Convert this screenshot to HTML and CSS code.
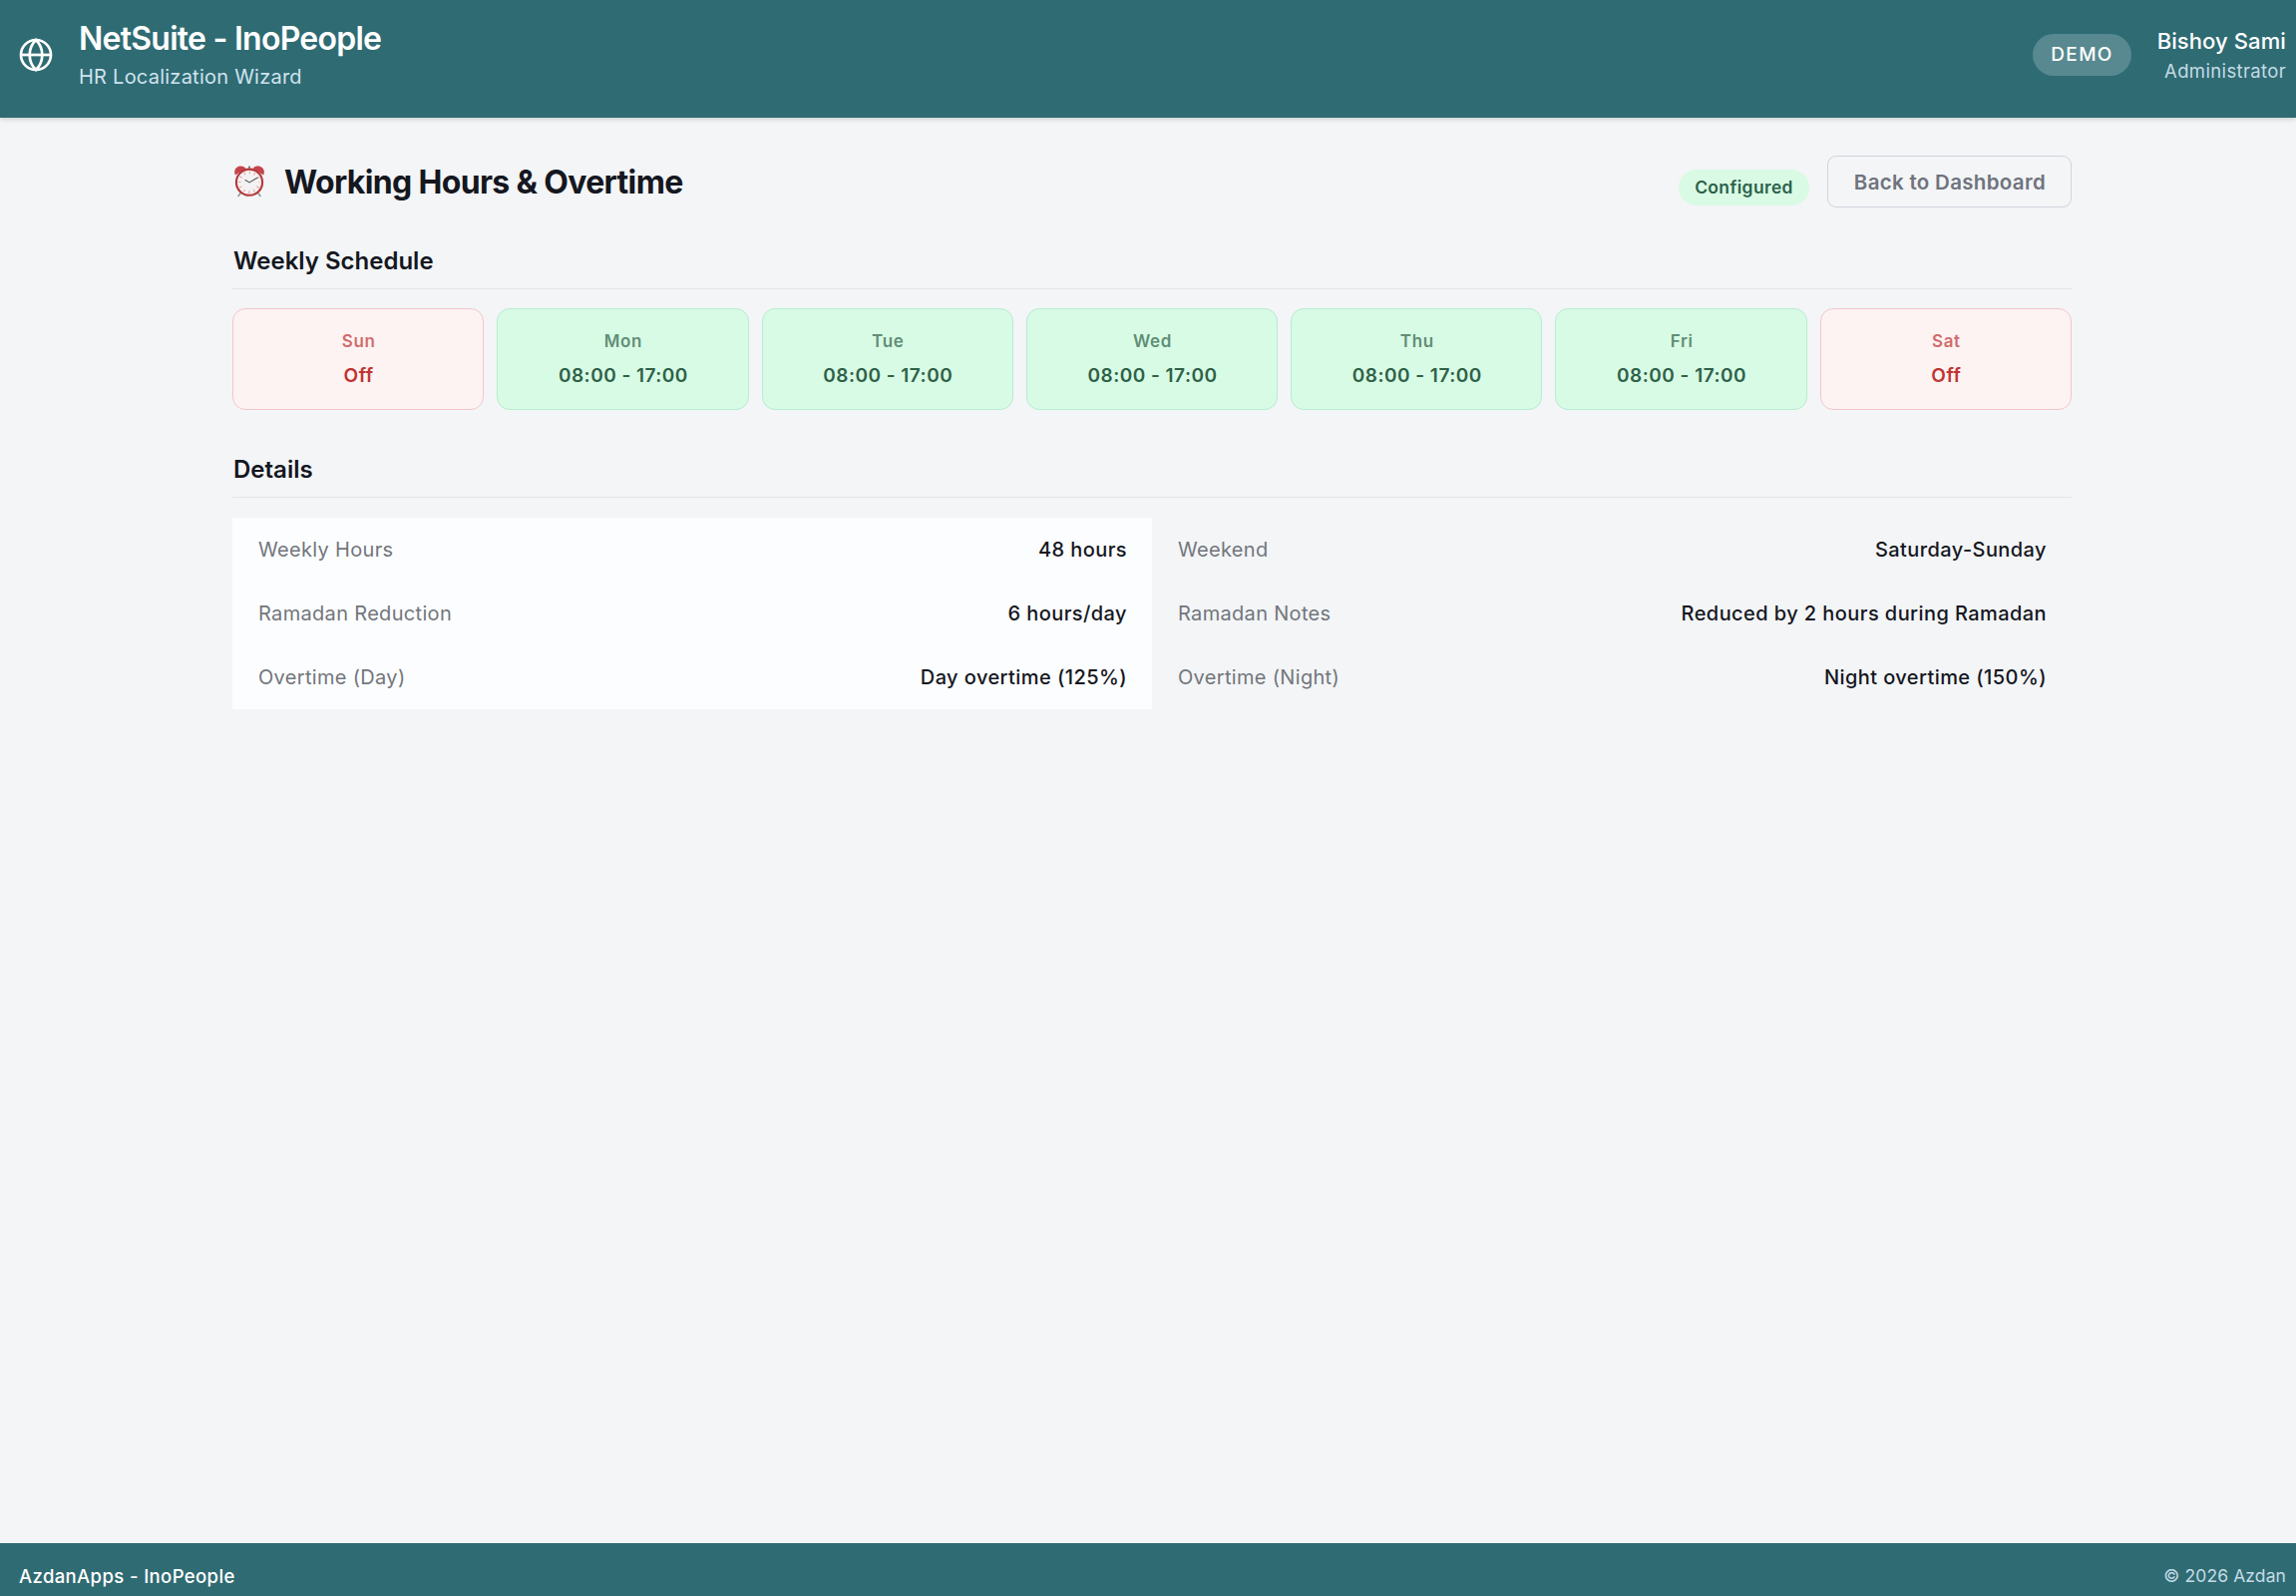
FILE: index.html
```html
<!DOCTYPE html>
<html lang="en">
<head>
  <meta charset="UTF-8" />
  <title>Working Hours &amp; Overtime</title>
  <link rel="stylesheet" href="styles.css">
</head>
<body>
  <header class="header">
    <svg class="globe" viewBox="0 0 24 24" fill="none" stroke="currentColor" stroke-width="1.8">
      <circle cx="12" cy="12" r="10" />
      <path d="M2 12h20" />
      <path d="M12 2c-2.800 2.700-4.200 6.200-4.200 10s1.400 7.300 4.200 10c2.800-2.700 4.200-6.200 4.200-10S14.800 4.700 12 2z" />
    </svg>
    <div class="brand">
      <div class="brand-name">NetSuite - InoPeople</div>
      <div class="brand-sub">HR Localization Wizard</div>
    </div>
    <span class="env">DEMO</span>
    <div class="user">
      <div class="user-name">Bishoy Sami</div>
      <div class="user-role">Administrator</div>
    </div>
  </header>

  <main class="main">
    <div class="page-head">
      <svg class="clock" viewBox="0 0 30 32" fill="none">
        <path d="M7 26.500L3.600 31M23 26.500l3.400 4.500" stroke="#8b8f92" stroke-width="1.300" />
        <path d="M14 .5h2v3h-2z" fill="#8d8587" />
        <path d="M.9 9.600C-1.300 4.600 2 .6 6.400.6c2.500 0 4.200.9 5 2.400z" fill="#c5434a" />
        <path d="M29.100 9.600C31.300 4.600 28 .6 23.600.6c-2.500 0-4.200.9-5 2.400z" fill="#c5434a" />
        <circle cx="15" cy="16.700" r="13.100" fill="#f4f2f2" stroke="#b5383a" stroke-width="2.100" />
        <circle cx="15" cy="16.700" r="9.800" stroke="#dc9a9a" stroke-width="2.800" stroke-dasharray=".9 4.231" stroke-dashoffset=".45" />
        <path d="M10.600 14.300L15 16.900l8.300-4.900" stroke="#55585c" stroke-width="1.100" />
      </svg>
      <h1 class="page-title">Working Hours &amp; Overtime</h1>
      <span class="status">Configured</span>
      <button class="back">Back to Dashboard</button>
    </div>

    <section class="section">
      <h2 class="section-title">Weekly Schedule</h2>
      <div class="week">
        <div class="day off"><span class="day-name">Sun</span><span class="day-hours">Off</span></div>
        <div class="day"><span class="day-name">Mon</span><span class="day-hours">08:00 - 17:00</span></div>
        <div class="day"><span class="day-name">Tue</span><span class="day-hours">08:00 - 17:00</span></div>
        <div class="day"><span class="day-name">Wed</span><span class="day-hours">08:00 - 17:00</span></div>
        <div class="day"><span class="day-name">Thu</span><span class="day-hours">08:00 - 17:00</span></div>
        <div class="day"><span class="day-name">Fri</span><span class="day-hours">08:00 - 17:00</span></div>
        <div class="day off"><span class="day-name">Sat</span><span class="day-hours">Off</span></div>
      </div>
    </section>

    <section class="section">
      <h2 class="section-title">Details</h2>
      <div class="details">
        <div class="detail"><span class="label">Weekly Hours</span><span class="value">48 hours</span></div>
        <div class="detail"><span class="label">Weekend</span><span class="value">Saturday-Sunday</span></div>
        <div class="detail"><span class="label">Ramadan Reduction</span><span class="value">6 hours/day</span></div>
        <div class="detail"><span class="label">Ramadan Notes</span><span class="value">Reduced by 2 hours during Ramadan</span></div>
        <div class="detail"><span class="label">Overtime (Day)</span><span class="value">Day overtime (125%)</span></div>
        <div class="detail"><span class="label">Overtime (Night)</span><span class="value">Night overtime (150%)</span></div>
      </div>
    </section>
  </main>

  <footer class="footer">
    <span class="footer-brand">AzdanApps - InoPeople</span>
    <span class="copyright">© 2026 Azdan</span>
  </footer>
</body>
</html>
```
FILE: styles.css
```css
* {
  box-sizing: border-box;
}

body {
  margin: 0;
  min-height: 1600px;
  display: flex;
  flex-direction: column;
  font-family: Inter, "Liberation Sans", sans-serif;
  background: #f3f5f7;
  color: #15171f;
}

.header {
  height: 118px;
  padding: 0 10px 8px 18px;
  display: flex;
  align-items: center;
  background: #2f6b73;
  color: #fff;
  box-shadow: 0 1px 5px rgba(0, 0, 0, 0.2);
}

.globe {
  width: 36px;
  height: 36px;
  margin-right: 25px;
}

.brand {
  flex: 1;
}

.brand-name {
  font-size: 32px;
  line-height: 38px;
  font-weight: 600;
  letter-spacing: -0.75px;
}

.brand-sub {
  padding-top: 5px;
  font-size: 20px;
  line-height: 28px;
  letter-spacing: 0.24px;
  color: #cfe3ee;
}

.env {
  padding: 0 18px;
  margin-right: 26px;
  border-radius: 21px;
  background: #588990;
  font-size: 19px;
  line-height: 42px;
  font-weight: 450;
  letter-spacing: 1.3px;
}

.user {
  text-align: right;
}

.user-name {
  font-size: 22px;
  line-height: 32px;
  font-weight: 450;
  letter-spacing: 0.1px;
}

.user-role {
  font-size: 18.5px;
  line-height: 28px;
  letter-spacing: 0.36px;
  color: #c3dbe5;
}

.main {
  flex: 1;
  width: 1844px;
  margin-left: 233px;
  padding-top: 38px;
}

.page-head {
  height: 52px;
  display: flex;
  align-items: center;
}

.clock {
  width: 30px;
  height: 32px;
  margin: 0 20px 0 2px;
}

.page-title {
  flex: 1;
  margin: 0;
  padding-top: 2px;
  font-size: 32px;
  line-height: 40px;
  font-weight: 700;
  letter-spacing: -0.66px;
}

.status {
  margin: 12px 18px 0 0;
  padding: 0 16px;
  border-radius: 18px;
  background: #d9fbe5;
  color: #2b6149;
  font-size: 17.5px;
  line-height: 36px;
  font-weight: 600;
  letter-spacing: 0.35px;
}

.back {
  height: 52px;
  padding: 0 25px 0 26px;
  border: 1px solid #d1d4db;
  border-radius: 9px;
  background: transparent;
  color: #6f737d;
  font-family: inherit;
  font-size: 20.5px;
  font-weight: 600;
  letter-spacing: 0.31px;
}

.section {
  margin-bottom: 44px;
}

.section-title {
  margin: 38px 0 19px;
  padding-left: 1px;
  height: 44px;
  border-bottom: 1px solid #e3e5e8;
  font-size: 24px;
  line-height: 32px;
  font-weight: 600;
}

.week {
  display: grid;
  grid-template-columns: repeat(7, 1fr);
  gap: 13px;
}

.day {
  height: 102px;
  padding: 19px 0 0 1px;
  display: flex;
  flex-direction: column;
  align-items: center;
  border: 1px solid #b6ecd0;
  border-radius: 13px;
  background: #d8fbe5;
  color: #2f6148;
}

.day.off {
  border-color: #f3c6cb;
  background: #fdf3f2;
  color: #bf3434;
}

.day-name {
  font-size: 17px;
  line-height: 26px;
  font-weight: 600;
  letter-spacing: 0.6px;
  opacity: 0.7;
}

.day-hours {
  margin-top: 8px;
  font-size: 19px;
  line-height: 28px;
  font-weight: 600;
  letter-spacing: 0.48px;
}

.details {
  display: grid;
  grid-template-columns: 1fr 1fr;
  padding-top: 1px;
}

.detail {
  height: 64px;
  padding: 0 25px 0 26px;
  display: flex;
  align-items: center;
  justify-content: space-between;
  font-size: 20px;
  letter-spacing: 0.32px;
}

.detail:nth-child(odd) {
  background: #fcfdfe;
}

.label {
  color: #72767c;
}

.value {
  font-weight: 480;
  letter-spacing: 0.42px;
}

.footer {
  height: 53px;
  padding: 13px 10px 0 19px;
  display: flex;
  justify-content: space-between;
  background: #2f6b73;
  color: #fff;
  line-height: 40px;
}

.footer-brand {
  font-size: 18.5px;
  font-weight: 480;
  letter-spacing: 0.38px;
}

.copyright {
  font-size: 17.5px;
  letter-spacing: 0.1px;
  color: #c3dbe5;
}
```
